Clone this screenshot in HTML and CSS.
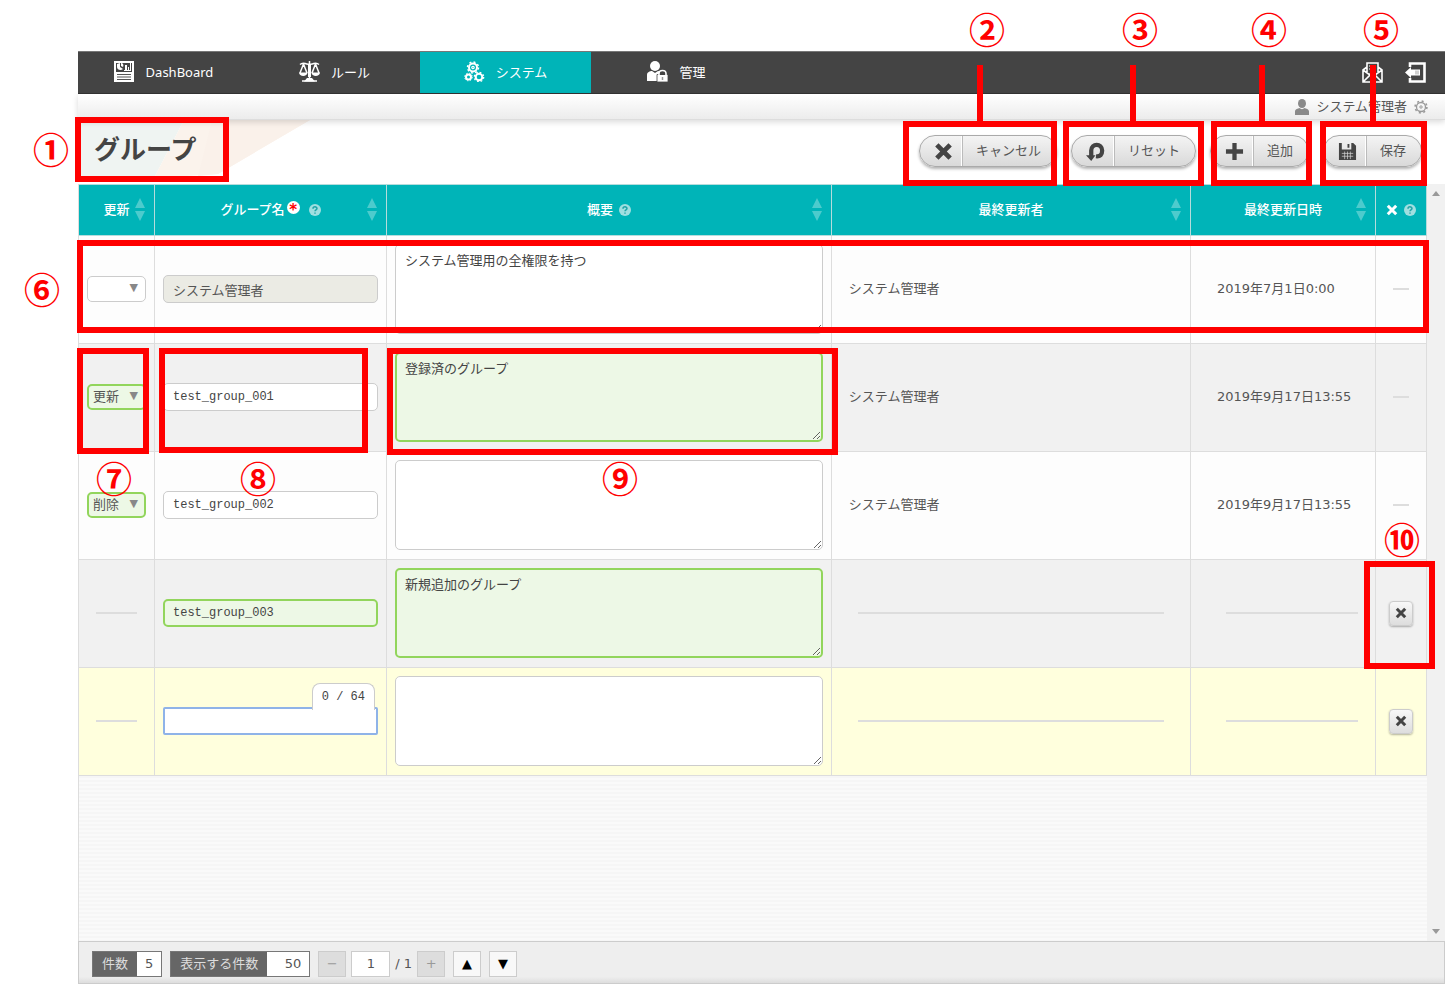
FILE: index.html
```html
<!DOCTYPE html>
<html lang="ja">
<head>
<meta charset="utf-8">
<title>グループ</title>
<link rel="stylesheet" href="styles.css">
</head>
<body>
<svg class="defs" aria-hidden="true">
  <symbol id="cross" viewBox="0 0 20 20"><path d="M3 3L17 17M17 3L3 17" fill="none" stroke="currentColor" stroke-width="5"/></symbol>
  <symbol id="sort" viewBox="0 0 10 24"><path d="M5 1L10 11H0ZM0 14H10L5 24Z" fill="currentColor"/></symbol>
  <symbol id="help" viewBox="0 0 12 12"><circle cx="6" cy="6" r="6" fill="#a0dfe0"/><path d="M4 4.8C4 2.2 8 2.3 8 4.6C8 6 6 5.900 6 7.300M6 8.400V9.800" fill="none" stroke="#20a5a8" stroke-width="1.500"/></symbol>
</svg>

<div class="app">
  <nav class="nav">
    <a class="nav-item" href="#">
      <svg class="nav-icon" viewBox="0 0 21 21"><path d="M0 0H20V21H0Z" fill="#fff"/><path d="M2 2H18V11H2Z" fill="#444"/><path d="M3 3L6 2V6L9 8C7 10 3 9 3 6ZM7 2C9 2 10 4 9 6L7 5ZM11 4H13V9H11ZM14 6H15V9H14ZM16 2H17V9H16ZM10 9H17V10H10Z" fill="#fff"/><path d="M3 13.500H17M3 16H17M3 18.500H17" stroke="#555" stroke-width="1"/></svg>
      <span>DashBoard</span>
    </a>
    <a class="nav-item" href="#">
      <svg class="nav-icon" viewBox="0 0 21 21" fill="none" stroke="#fff" stroke-width="1.500"><path d="M1 3.500C5 0 6 4 10.500 3C15 4 16 0 20 3.500M10.500 0V18M4.500 3L1 12M4.500 3L8 12M16.500 3L13 12M16.500 3L20 12"/><path d="M0 11.500H8.500C8.500 16 0 16 0 11.500ZM12.500 11.500H21C21 16 12.500 16 12.500 11.500ZM8 17H13L16 20.500H5ZM9 3H12V16H9Z" fill="#fff" stroke="none"/><path d="M3 20H18"/></svg>
      <span>ルール</span>
    </a>
    <a class="nav-item active" href="#">
      <svg class="nav-icon" viewBox="0 0 21 21" fill="none" stroke="#fff"><circle cx="9" cy="6.500" r="4" stroke-width="2"/><circle cx="9" cy="6.500" r="5.500" stroke-width="1.500" stroke-dasharray="2 2.300"/><circle cx="9" cy="6.500" r="1.200" stroke-width="1.200"/><circle cx="4.500" cy="16" r="2.500" stroke-width="2"/><circle cx="4.500" cy="16" r="3.800" stroke-dasharray="1.500 1.500"/><circle cx="15" cy="16" r="3.300" stroke-width="2"/><circle cx="15" cy="16" r="4.700" stroke-width="1.300" stroke-dasharray="1.800 1.900"/></svg>
      <span>システム</span>
    </a>
    <a class="nav-item" href="#">
      <svg class="nav-icon" viewBox="0 0 21 21"><circle cx="8" cy="5" r="5" fill="#fff"/><path d="M0 20V14C0 11 3 10 5 10L8 12L11 10C13 10 15 11 15 14V20Z" fill="#fff"/><path d="M10 13.500H21V21H10Z" fill="#fff" stroke="#444" stroke-width=".8"/><path d="M12 14V12.500C12 8.500 19 8.500 19 12.500V14" fill="#444" stroke="#fff" stroke-width="1.600"/><path d="M15.500 16V19" stroke="#999" stroke-width="1.500"/></svg>
      <span>管理</span>
    </a>
    <div class="nav-tools">
      <a href="#" aria-label="お知らせ"><svg class="nav-icon" viewBox="0 0 21 21" fill="none" stroke="#fff" stroke-width="1.600"><path d="M1 8V20H20V8L16 5V1H5V5ZM1 8L8 13L1 20M20 8L13 13L20 20M7 12.500L10.500 11L14 12.500M5 5V10M16 5V10"/><path d="M7 4H14M7 7H14M8 9.500H13" stroke-width="1.200"/></svg></a>
      <a href="#" aria-label="ログアウト"><svg class="nav-icon" viewBox="0 0 21 21"><path d="M5 5V1.500H19.500V19.500H5V16" fill="none" stroke="#fff" stroke-width="2.600"/><path d="M0 10.500L6 5V7.500H15V13.500H6V16Z" fill="#fff"/><path d="M11 8.500V12.500M13 8.500V12.500" stroke="#888" stroke-width=".8"/></svg></a>
    </div>
  </nav>

  <div class="userbar">
    <svg class="user-icon" viewBox="0 0 14 16" fill="#8a8a8a"><ellipse cx="7" cy="4.500" rx="4" ry="4.500"/><path d="M0 16V12.500C0 10 3 9.500 4.500 9C6 10.500 8 10.500 9.500 9C11 9.500 14 10 14 12.500V16Z"/></svg>
    <span>システム管理者</span>
    <svg class="gear-icon" viewBox="0 0 14 14" fill="none" stroke="#999"><circle cx="7" cy="7" r="4.500" stroke-width="1.300"/><circle cx="7" cy="7" r="5.900" stroke-width="1.600" stroke-dasharray="2 2.630"/><circle cx="7" cy="7" r="1.200"/></svg>
  </div>

  <header class="heading">
    <svg class="heading-art" viewBox="0 0 232 58"><path d="M0 0H106L76 58H0Z" fill="#eff4f2"/><path d="M106 0H232L140 54L76 58Z" fill="#fbf3ec"/><path d="M134 0H232L140 54L120 56Z" fill="#faf1ea"/></svg>
    <h1 class="title">グループ</h1>
    <div class="actions">
      <button class="action" type="button"><span class="action-icon"><svg viewBox="0 0 20 20"><use href="#cross"/></svg></span><span class="action-label">キャンセル</span></button>
      <button class="action" type="button"><span class="action-icon"><svg viewBox="0 0 20 20"><path d="M5.500 15V9C5.500 1 17 1 17 9C17 13.500 15 15.500 10.500 15" fill="none" stroke="currentColor" stroke-width="4.500"/><path d="M0 14H10L5.500 20Z" fill="currentColor"/></svg></span><span class="action-label">リセット</span></button>
      <button class="action" type="button"><span class="action-icon"><svg viewBox="0 0 20 20"><path d="M10 1V19M1 10H19" stroke="currentColor" stroke-width="4.500"/></svg></span><span class="action-label">追加</span></button>
      <button class="action" type="button"><span class="action-icon"><svg viewBox="0 0 20 20"><path d="M1 1H4V8H14V1H16L19 4V19H1ZM10 2H12V6H10Z" fill="currentColor"/><path d="M4 12H16M4 15H16M7 10V18M10 10V18M13 10V18" stroke="#ddd" stroke-width=".7"/></svg></span><span class="action-label">保存</span></button>
    </div>
  </header>

  <main class="content">
    <div class="table-area">
      <table class="grid">
        <colgroup><col class="c-update"><col class="c-name"><col class="c-desc"><col class="c-user"><col class="c-date"><col class="c-del"></colgroup>
        <thead>
          <tr>
            <th><div class="th">更新<svg class="sort"><use href="#sort"/></svg></div></th>
            <th><div class="th">グループ名<span class="required">*</span><svg class="help spaced"><use href="#help"/></svg><svg class="sort"><use href="#sort"/></svg></div></th>
            <th><div class="th">概要<svg class="help"><use href="#help"/></svg><svg class="sort"><use href="#sort"/></svg></div></th>
            <th><div class="th">最終更新者<svg class="sort"><use href="#sort"/></svg></div></th>
            <th><div class="th">最終更新日時<svg class="sort"><use href="#sort"/></svg></div></th>
            <th><div class="th"><svg class="th-cross"><use href="#cross"/></svg><svg class="help"><use href="#help"/></svg></div></th>
          </tr>
        </thead>
        <tbody>
          <tr>
            <td><div class="pick"><select aria-label="更新"><option></option><option>更新</option><option>削除</option></select><span class="caret">▼</span></div></td>
            <td><input class="field wide" type="text" aria-label="グループ名" value="システム管理者" disabled></td>
            <td><textarea class="field" aria-label="概要">システム管理用の全権限を持つ</textarea></td>
            <td class="user">システム管理者</td>
            <td class="date">2019年7月1日0:00</td>
            <td><div class="none"></div></td>
          </tr>
          <tr>
            <td><div class="pick"><select class="changed" aria-label="更新"><option>更新</option><option>削除</option></select><span class="caret">▼</span></div></td>
            <td><input class="field" type="text" aria-label="グループ名" value="test_group_001"></td>
            <td><textarea class="field changed" aria-label="概要">登録済のグループ</textarea></td>
            <td class="user">システム管理者</td>
            <td class="date">2019年9月17日13:55</td>
            <td><div class="none"></div></td>
          </tr>
          <tr>
            <td><div class="pick"><select class="changed" aria-label="更新"><option>削除</option><option>更新</option></select><span class="caret">▼</span></div></td>
            <td><input class="field" type="text" aria-label="グループ名" value="test_group_002"></td>
            <td><textarea class="field" aria-label="概要"></textarea></td>
            <td class="user">システム管理者</td>
            <td class="date">2019年9月17日13:55</td>
            <td><div class="none"></div></td>
          </tr>
          <tr>
            <td><div class="none"></div></td>
            <td><input class="field changed" type="text" aria-label="グループ名" value="test_group_003"></td>
            <td><textarea class="field changed" aria-label="概要">新規追加のグループ</textarea></td>
            <td class="user"><div class="none"></div></td>
            <td class="date"><div class="none"></div></td>
            <td><button class="remove" type="button" aria-label="行を削除"><svg><use href="#cross"/></svg></button></td>
          </tr>
          <tr class="editing">
            <td><div class="none"></div></td>
            <td><div class="counted"><input class="field focused" type="text" aria-label="グループ名"><span class="counter">0 / 64</span></div></td>
            <td><textarea class="field" aria-label="概要"></textarea></td>
            <td class="user"><div class="none"></div></td>
            <td class="date"><div class="none"></div></td>
            <td><button class="remove" type="button" aria-label="行を削除"><svg><use href="#cross"/></svg></button></td>
          </tr>
        </tbody>
      </table>
    </div>
    <div class="scrollbar">
      <svg viewBox="0 0 8 5"><path d="M4 0L8 5H0Z" fill="#999"/></svg>
      <svg viewBox="0 0 8 5"><path d="M0 0H8L4 5Z" fill="#999"/></svg>
    </div>
  </main>

  <footer class="footer">
    <div class="stat"><span class="stat-label">件数</span><span class="stat-value">5</span></div>
    <div class="stat"><label class="stat-label" for="per-page">表示する件数</label><input class="stat-input" id="per-page" type="text" value="50"></div>
    <div class="pager">
      <button class="step off" type="button" disabled>−</button>
      <input class="page" type="text" aria-label="ページ" value="1">
      <span class="pages">/ 1</span>
      <button class="step off" type="button" disabled>+</button>
    </div>
    <button class="step" type="button">▲</button>
    <button class="step" type="button">▼</button>
  </footer>
</div>

<div class="notes">
  <span class="num n1">①</span><span class="num n2">②</span><span class="num n3">③</span><span class="num n4">④</span><span class="num n5">⑤</span>
  <span class="num n6">⑥</span><span class="num n7">⑦</span><span class="num n8">⑧</span><span class="num n9">⑨</span><span class="num n10">⑩</span>
  <i class="line l2"></i><i class="line l3"></i><i class="line l4"></i><i class="line l5"></i>
  <i class="box b1"></i><i class="box b2"></i><i class="box b3"></i><i class="box b4"></i><i class="box b5"></i>
  <i class="box b6"></i><i class="box b7"></i><i class="box b8"></i><i class="box b9"></i><i class="box b10"></i>
</div>
</body>
</html>
```
FILE: styles.css
```css
* { box-sizing: border-box; }
body {
  margin: 0;
  position: relative;
  background: #fff;
  color: #555;
  font: 13px/20px "DejaVu Sans", "Noto Sans CJK JP", sans-serif;
}
button, input, select, textarea { font: inherit; color: inherit; margin: 0; }
a { color: inherit; text-decoration: none; }
.defs { position: absolute; width: 0; height: 0; }
.app {
  display: flex;
  flex-direction: column;
  min-height: 100vh;
  padding: 51px 0 3px 78px;
}

/* Navigation */
.nav { display: flex; height: 43px; background: #444; color: #fff; border-top: 1px solid #777; border-bottom: 1px solid #333; }
.nav-item { display: flex; align-items: center; justify-content: center; gap: 11px; width: 171px; padding-bottom: 2px; font-family: "Noto Sans", "Noto Sans CJK JP", sans-serif; }
.nav-item.active { background: #00b4b8; }
.nav-icon { display: block; width: 21px; height: 21px; }
.nav-tools { display: flex; align-items: center; gap: 22px; margin-left: auto; padding-right: 19px; }

.userbar {
  position: relative;
  z-index: 1;
  display: flex;
  align-items: center;
  justify-content: flex-end;
  gap: 7px;
  height: 26px;
  padding-right: 17px;
  background: linear-gradient(#fff, #ececec);
  border-bottom: 1px solid #ddd;
  box-shadow: 0 2px 6px rgba(0, 0, 0, .15);
}
.user-icon { width: 14px; height: 16px; }
.gear-icon { width: 14px; height: 14px; }

/* Heading */
.heading { position: relative; display: flex; align-items: center; justify-content: space-between; height: 64px; padding: 0 23px 2px 16px; }
.heading-art { position: absolute; left: 0; top: 0; width: 232px; height: 58px; }
.title { position: relative; margin: 0 0 6px; color: #444; font-size: 26px; line-height: 40px; font-weight: 700; font-family: "Noto Sans CJK JP", sans-serif; }
.actions { display: flex; gap: 14px; }
.action {
  display: flex;
  height: 32px;
  padding: 0;
  border: 1px solid #aaa;
  border-radius: 16px;
  background: linear-gradient(#f4f4f4, #d9d9d9);
  box-shadow: 0 2px 3px rgba(0, 0, 0, .3);
  white-space: nowrap;
}
.action-icon { display: flex; align-items: center; justify-content: center; width: 42px; padding-left: 6px; border-right: 1px solid #fff; color: #444; }
.action-icon svg { width: 19px; height: 19px; }
.action-label { padding: 0 15px 0 13px; border-left: 1px solid #bbb; line-height: 29px; }

/* Table */
.content { display: flex; flex: 1; }
.table-area { flex: 1; min-width: 0; border-left: 1px solid #ddd; background: repeating-linear-gradient(#f6f6f6 0 2px, #fafafa 2px 4px); }
.grid { width: 100%; table-layout: fixed; border-collapse: separate; border-spacing: 0; }
.c-update { width: 76px; }
.c-name { width: 232px; }
.c-desc { width: 33%; }
.c-date { width: 185px; }
.c-del { width: 51px; }
th { height: 52px; padding: 0; background: #00b4b8; color: #fff; font-weight: 500; border: 1px solid #b5dcdc; border-left: 0; }
.th { position: relative; display: flex; align-items: center; justify-content: center; height: 50px; padding-bottom: 1px; }
.sort { position: absolute; right: 9px; top: 12px; width: 10px; height: 24px; color: #4dcbcd; }
.help { width: 12px; height: 12px; margin-left: 6px; }
.help.spaced { margin-left: 9px; }
.th-cross { width: 12px; height: 12px; }
.required { width: 13px; height: 13px; margin: 0 0 4px 2px; border-radius: 50%; background: #fff; color: #f00; font-size: 15px; line-height: 18px; font-weight: 700; text-align: center; }
td { height: 108px; padding: 0 8px 1px; border: 1px solid #ddd; border-width: 0 1px 1px 0; background: #fdfdfd; vertical-align: middle; }
tr:nth-child(even) td { background: #f1f1f1; }
tr.editing td { background: #ffffdd; }
td.user { padding: 0 17px 1px; }
td.date { padding: 0 0 1px 26px; }
.none { height: 2px; margin: 0 9px; background: #ddd; }
.date .none { margin-right: 17px; }
.field { display: block; width: 100%; border: 1px solid #ccc; border-radius: 5px; background: #fff; color: #444; }
input.field { height: 28px; padding: 0 9px; font: 12px/18px "Liberation Mono", "Noto Sans CJK JP", monospace; }
input.wide { font-size: 13px; background: #ebebe4; color: #555; }
textarea.field { height: 90px; padding: 6px 9px; }
.field.changed, .pick .changed { border: 2px solid #92d55c; background: #edf8e6; }
.field.changed { padding-left: 8px; }
textarea.changed { padding-top: 5px; }
.field.focused { border: 2px solid #8fb3e8; border-radius: 2px; }
.pick { position: relative; }
.pick select { display: block; width: 100%; height: 26px; padding: 0 5px; appearance: none; border: 1px solid #ccc; border-radius: 5px; background: #fff; }
.pick .changed { padding: 0 4px; }
.caret { position: absolute; right: 8px; top: 2px; color: #888; font-size: 11px; pointer-events: none; }
.counted { position: relative; }
.counter { position: absolute; right: 3px; bottom: 25px; padding: 0 9px; border: 1px solid #ccc; border-bottom: 0; border-radius: 8px 8px 0 0; background: #fff; color: #444; font: 12px/26px "Liberation Mono", monospace; }
.remove { display: flex; align-items: center; justify-content: center; width: 24px; height: 25px; margin: 0 auto; padding: 0; border: 1px solid #ccc; border-radius: 4px; background: linear-gradient(#f8f8f8, #ddd); box-shadow: 0 1px 2px rgba(0, 0, 0, .3); color: #444; }
.remove svg { width: 12px; height: 12px; }
.scrollbar { display: flex; flex-direction: column; justify-content: space-between; align-items: center; width: 18px; padding: 7px 0; background: #f1f1f1; }
.scrollbar svg { width: 8px; height: 5px; }

/* Footer */
.footer { display: flex; align-items: center; gap: 8px; height: 43px; padding: 2px 13px 0; border: 1px solid #ccc; background: linear-gradient(#eee 85%, #ddd); }
.stat { display: flex; height: 26px; border: 1px solid #777; background: #fff; line-height: 24px; }
.stat-label { padding: 0 9px; background: #666; color: #ddd; }
.stat-value { padding: 0 8px; }
.stat-input { width: 42px; padding: 0 8px; border: 0; background: #fff; text-align: right; }
.pager { display: flex; align-items: center; gap: 5px; }
.page { width: 39px; height: 26px; padding: 0; border: 1px solid #ccc; background: #fff; text-align: center; }
.pages { white-space: nowrap; }
.step { width: 28px; height: 26px; padding: 0; border: 1px solid #ccc; background: #f8f8f8; color: #000; }
.step.off { background: #ddd; color: #999; }

/* Callouts drawn over the screen */
.notes { position: absolute; left: 0; top: 0; color: #f00; pointer-events: none; z-index: 2; }
.num { position: absolute; width: 40px; height: 40px; text-align: center; font: 700 36px/36px "Noto Sans CJK JP", sans-serif; }
.n1 { left: 31px; top: 130px; }
.n2 { left: 967px; top: 10px; }
.n3 { left: 1120px; top: 10px; }
.n4 { left: 1249px; top: 10px; }
.n5 { left: 1361px; top: 10px; }
.n6 { left: 22px; top: 270px; }
.n7 { left: 94px; top: 459px; }
.n8 { left: 238px; top: 459px; }
.n9 { left: 600px; top: 459px; }
.n10 { left: 1382px; top: 520px; }
.line { position: absolute; top: 65px; width: 6px; height: 58px; background: #f00; }
.l2 { left: 977px; }
.l3 { left: 1130px; }
.l4 { left: 1259px; }
.l5 { left: 1370px; }
.box { position: absolute; border: 6px solid #f00; }
.b1 { left: 75px; top: 117px; width: 154px; height: 65px; }
.b2 { left: 903px; top: 121px; width: 154px; height: 65px; }
.b3 { left: 1063px; top: 121px; width: 141px; height: 65px; }
.b4 { left: 1211px; top: 121px; width: 101px; height: 65px; }
.b5 { left: 1320px; top: 121px; width: 107px; height: 65px; }
.b6 { left: 77px; top: 240px; width: 1352px; height: 93px; }
.b7 { left: 77px; top: 348px; width: 72px; height: 106px; }
.b8 { left: 159px; top: 348px; width: 209px; height: 105px; }
.b9 { left: 387px; top: 348px; width: 451px; height: 107px; }
.b10 { left: 1364px; top: 561px; width: 71px; height: 108px; }
```
